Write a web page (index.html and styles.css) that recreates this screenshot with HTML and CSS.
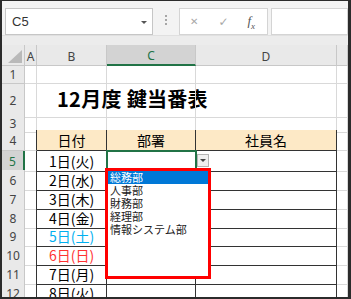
FILE: index.html
```html
<!doctype html>
<html lang="ja">
<head>
    <meta charset="utf-8">
    <title>12月度 鍵当番表</title>
    <link rel="stylesheet" href="styles.css">
</head>
<body>
<div class="app">
    <div class="fbar">
        <div class="namebox">C5<span class="caret"></span></div>
        <div class="dots"><i></i><i></i><i></i></div>
        <div class="fxbox"><span class="x">&#x2715;</span><span class="ok">&#x2713;</span><span class="fx">f<sub>x</sub></span></div>
        <div class="input"></div>
    </div>
    <div class="sheet">
        <div class="row hdr">
            <div class="corner"><span class="tri"></span></div>
            <div class="ch">A</div><div class="ch">B</div><div class="ch sel">C</div><div class="ch">D</div><div class="ch"></div>
        </div>
        <div class="row h18">
            <div class="rh">1</div><div class="c"></div><div class="c"></div><div class="c"></div><div class="c"></div><div class="c"></div>
        </div>
        <div class="row h31">
            <div class="rh">2</div><div class="c"></div><div class="c title">12月度 鍵当番表</div><div class="c"></div><div class="c"></div><div class="c"></div>
        </div>
        <div class="row h15">
            <div class="rh">3</div><div class="c"></div><div class="c tt"></div><div class="c tt"></div><div class="c tt"></div><div class="c"></div>
        </div>
        <div class="row h21">
            <div class="rh">4</div><div class="c tl"></div><div class="c t th">日付</div><div class="c t th">部署</div><div class="c t th">社員名</div><div class="c"></div>
        </div>
        <div class="row h19">
            <div class="rh cur">5</div><div class="c tl"></div><div class="c t">1日(火)</div><div class="c t"></div><div class="c t"></div><div class="c"></div>
        </div>
        <div class="row h19">
            <div class="rh">6</div><div class="c tl"></div><div class="c t">2日(水)</div><div class="c t"></div><div class="c t"></div><div class="c"></div>
        </div>
        <div class="row h19">
            <div class="rh">7</div><div class="c tl"></div><div class="c t">3日(木)</div><div class="c t"></div><div class="c t"></div><div class="c"></div>
        </div>
        <div class="row h18">
            <div class="rh">8</div><div class="c tl"></div><div class="c t">4日(金)</div><div class="c t"></div><div class="c t"></div><div class="c"></div>
        </div>
        <div class="row h19">
            <div class="rh">9</div><div class="c tl"></div><div class="c t sat">5日(土)</div><div class="c t"></div><div class="c t"></div><div class="c"></div>
        </div>
        <div class="row h19">
            <div class="rh">10</div><div class="c tl"></div><div class="c t sun">6日(日)</div><div class="c t"></div><div class="c t"></div><div class="c"></div>
        </div>
        <div class="row h19">
            <div class="rh">11</div><div class="c tl"></div><div class="c t">7日(月)</div><div class="c t"></div><div class="c t"></div><div class="c"></div>
        </div>
        <div class="row h19">
            <div class="rh">12</div><div class="c tl"></div><div class="c t">8日(火)</div><div class="c t"></div><div class="c t"></div><div class="c"></div>
        </div>

        <!-- アクティブセル C5 と入力規則のリスト -->
        <div class="active"></div>
        <div class="dropbtn"><span></span></div>
        <ul class="list">
            <li class="on">総務部</li>
            <li>人事部</li>
            <li>財務部</li>
            <li>経理部</li>
            <li>情報システム部</li>
        </ul>
    </div>
</div>
</body>
</html>
```
FILE: styles.css
```css
body {
    margin: 0;
}
.app {
    width: 346px;
    height: 296px;
    border-style: solid;
    border-color: #2b2b2b;
    border-width: 1px 3px 2px 2px;
    background: #ececec;
    overflow: hidden;
    font-family: "Noto Sans CJK JP", sans-serif;
}

/* 数式バー */
.fbar {
    height: 27px;
    padding-top: 7px;
    display: flex;
    background: #f3f3f3;
    margin-bottom: 10px;
    box-shadow: 0 1px 0 #e0e0e0;
}
.namebox {
    margin-left: 3px;
    width: 145px;
    height: 25px;
    border: 1px solid #c6c6c6;
    background: #fff;
    position: relative;
    font-family: "Liberation Sans", sans-serif;
    font-size: 13px;
    line-height: 25px;
    padding-left: 6px;
    box-sizing: content-box;
    width: 140px;
    color: #333;
}
.caret {
    position: absolute;
    right: 5px;
    top: 12px;
    border-left: 3px solid transparent;
    border-right: 3px solid transparent;
    border-top: 3px solid #555;
}
.dots {
    width: 26px;
    display: flex;
    flex-direction: column;
    align-items: center;
    justify-content: center;
    gap: 2px;
    padding-bottom: 4px;
}
.dots i {
    width: 2px;
    height: 2px;
    background: #a6a6a6;
}
.fxbox {
    width: 87px;
    height: 25px;
    border: 1px solid #d4d4d4;
    background: #fff;
    display: flex;
    align-items: center;
    color: #a8a8a8;
    font-family: "DejaVu Sans", sans-serif;
}
.fxbox .x {
    margin-left: 10px;
    font-size: 10px;
}
.fxbox .ok {
    margin-left: 20px;
    font-size: 12px;
}
.fxbox .fx {
    margin-left: 19px;
    font-family: "Liberation Serif", serif;
    font-style: italic;
    font-size: 13px;
    color: #555;
}
.fxbox .fx sub {
    font-size: 9px;
}
.input {
    margin-left: 3px;
    flex: 1;
    height: 25px;
    border: 1px solid #d4d4d4;
    background: #fff;
}

/* シート */
.sheet {
    position: relative;
    background: #fff;
}
.row {
    display: grid;
    grid-template-columns: 23px 12px 70px 89px 141px 11px;
}
.row > div {
    box-sizing: border-box;
    border-right: 1px solid #d9d9d9;
    border-bottom: 1px solid #d9d9d9;
    display: flex;
    align-items: center;
    justify-content: center;
    white-space: nowrap;
}
.hdr { height: 21px; }
.h15 { height: 15px; }
.h18 { height: 18px; }
.h19 { height: 19px; }
.h21 { height: 21px; }
.h31 { height: 31px; }

.row > .corner,
.row > .ch,
.row > .rh {
    background: #e9e9e9;
    border-color: #c8c8c8;
    color: #444;
    font-family: "Noto Sans", sans-serif;
    font-size: 12px;
}
.row > .ch {
    padding-top: 2px;
}
.row > .ch.sel {
    background: #d3d3d3;
    color: #217346;
    border-bottom: 2px solid #217346;
}
.row > .rh.cur {
    background: #d3d3d3;
    color: #217346;
    border-right: 2px solid #217346;
}
.corner {
    position: relative;
}
.tri {
    position: absolute;
    right: 2px;
    bottom: 2px;
    border-left: 14px solid transparent;
    border-bottom: 13px solid #b9b9b9;
}

.row > .c {
    font-size: 14px;
    color: #000;
}
.row > .title {
    justify-content: flex-start;
    align-items: flex-end;
    padding: 0 0 4px 20px;
    font-size: 20px;
    font-weight: bold;
    overflow: visible;
    letter-spacing: 0.3px;
}
.row > .tt {
    border-bottom-color: #333;
}
.row > .tl {
    border-right-color: #333;
}
.row > .t {
    border-right-color: #333;
    border-bottom-color: #333;
}
.row > .th {
    background: #fde9c6;
}
.row > .sat {
    color: #00b0f0;
}
.row > .sun {
    color: #ff3333;
}

.active {
    position: absolute;
    left: 104px;
    top: 105px;
    width: 91px;
    height: 21px;
    border: 2px solid #217346;
    box-sizing: border-box;
}
.dropbtn {
    position: absolute;
    left: 195px;
    top: 109px;
    width: 12px;
    height: 13px;
    box-sizing: border-box;
    border: 1px solid #b4b4b4;
    background: #f0f0f0;
    display: flex;
    align-items: center;
    justify-content: center;
}
.dropbtn span {
    border-left: 3px solid transparent;
    border-right: 3px solid transparent;
    border-top: 3px solid #444;
}
.list {
    position: absolute;
    left: 103px;
    top: 123px;
    width: 106px;
    height: 111px;
    box-sizing: border-box;
    margin: 0;
    padding: 0;
    list-style: none;
    background: #fff;
    border: 3px solid #ff0000;
    font-size: 11px;
    color: #222;
}
.list li {
    height: 13px;
    line-height: 13px;
    padding-left: 2px;
}
.list li.on {
    background: #0078d7;
    color: #fff;
}
```
